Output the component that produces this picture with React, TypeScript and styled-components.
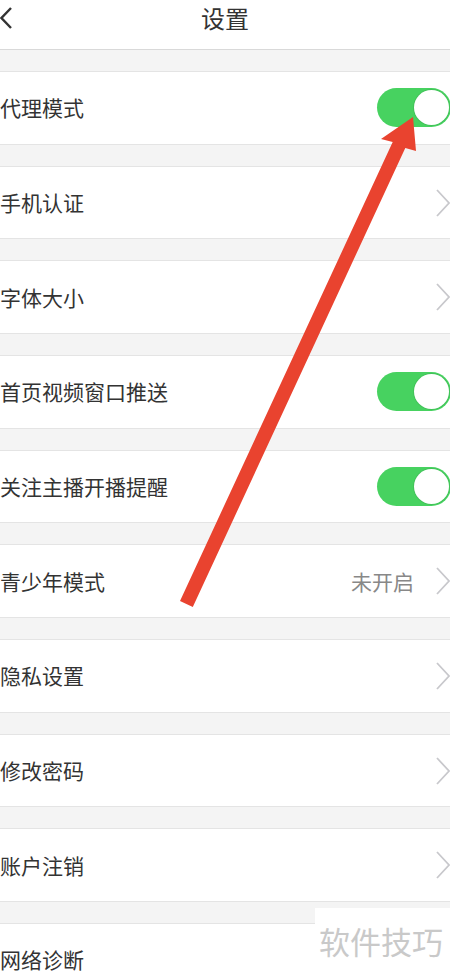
import React from "react";
import styled, { createGlobalStyle } from "styled-components";

const Global = createGlobalStyle`
  html, body {
    margin: 0;
    padding: 0;
    background: #f4f4f4;
    width: 450px;
    height: 975px;
    overflow: hidden;
  }
  body {
    font-family: "Noto Sans CJK SC", "Noto Sans", sans-serif;
    color: #333;
  }
`;

const Page = styled.div`
  position: relative;
  width: 450px;
  height: 975px;
  overflow: hidden;
  background: #f4f4f4;
`;

const Header = styled.header`
  height: 49px;
  background: #fff;
  border-bottom: 1px solid #d9d9d9;
  display: grid;
  grid-template-columns: 1fr auto 1fr;
  align-items: start;
`;

const BackButton = styled.div`
  display: flex;
  align-items: center;
  height: 36px;
  padding-left: 0;
`;

const Title = styled.h1`
  margin: 0;
  font-size: 24px;
  font-weight: 400;
  line-height: 36px;
  color: #333;
`;

const List = styled.div`
  display: flex;
  flex-direction: column;
  gap: 21.17px;
  padding-top: 21.17px;
`;

const Row = styled.div`
  height: 71.5px;
  background: #fff;
  border-top: 1px solid #e4e4e4;
  border-bottom: 1px solid #e4e4e4;
  display: flex;
  align-items: center;
  justify-content: space-between;
`;

const Label = styled.span`
  font-size: 21px;
  line-height: 1;
  color: #333;
`;

const Right = styled.div`
  display: flex;
  align-items: center;
`;

const Value = styled.span`
  font-size: 21px;
  line-height: 1;
  color: #888;
  margin-right: 22px;
`;

const Chevron = styled.svg`
  display: block;
  width: 14px;
  height: 28px;
`;

const Switch = styled.div<{ $on: boolean }>`
  width: 74px;
  height: 39px;
  border-radius: 20px;
  box-sizing: border-box;
  background: ${(p) => (p.$on ? "#47d260" : "#e5e5e5")};
  display: flex;
  align-items: center;
  justify-content: ${(p) => (p.$on ? "flex-end" : "flex-start")};
  padding: 0 2px;
  margin-right: -1px;
`;

const Knob = styled.div`
  width: 35px;
  height: 35px;
  border-radius: 50%;
  background: #fff;
  box-shadow: 0 0 0 1px rgba(0, 0, 0, 0.08);
`;

const Overlay = styled.svg`
  position: absolute;
  left: 0;
  top: 0;
  width: 450px;
  height: 975px;
  pointer-events: none;
`;

const Watermark = styled.div`
  position: absolute;
  right: 0;
  bottom: 0;
  width: 135px;
  height: 67px;
  background: #fff;
  display: flex;
  align-items: center;
  padding-left: 4px;
  box-sizing: border-box;
  font-size: 31px;
  color: #c9c9c9;
  line-height: 1;
  padding-bottom: 2px;
`;

type Item = {
  label: string;
  kind: "switch" | "link";
  value?: string;
};

const items: Item[] = [
  { label: "代理模式", kind: "switch" },
  { label: "手机认证", kind: "link" },
  { label: "字体大小", kind: "link" },
  { label: "首页视频窗口推送", kind: "switch" },
  { label: "关注主播开播提醒", kind: "switch" },
  { label: "青少年模式", kind: "link", value: "未开启" },
  { label: "隐私设置", kind: "link" },
  { label: "修改密码", kind: "link" },
  { label: "账户注销", kind: "link" },
  { label: "网络诊断", kind: "link" },
];

const ChevronIcon = () => (
  <Chevron viewBox="0 0 14 28">
    <polyline
      points="1,1 13,14 1,27"
      fill="none"
      stroke="#c8c8cc"
      strokeWidth="1.8"
      strokeLinejoin="miter"
    />
  </Chevron>
);

export default function App() {
  return (
    <>
      <Global />
      <Page>
        <Header>
          <BackButton>
            <svg width="14" height="24" viewBox="0 0 14 24">
              <polyline
                points="11,2 1.5,12 11,22"
                fill="none"
                stroke="#333"
                strokeWidth="2.4"
              />
            </svg>
          </BackButton>
          <Title>设置</Title>
          <div />
        </Header>
        <List>
          {items.map((it) => (
            <Row key={it.label}>
              <Label>{it.label}</Label>
              <Right>
                {it.kind === "switch" ? (
                  <Switch $on>
                    <Knob />
                  </Switch>
                ) : (
                  <>
                    {it.value && <Value>{it.value}</Value>}
                    <ChevronIcon />
                  </>
                )}
              </Right>
            </Row>
          ))}
        </List>
        <Overlay viewBox="0 0 450 975">
          <polygon
            points="180,601 392.7,142 381,139 413,117 416,151 405.3,148 192.8,607"
            fill="#e9432f"
          />
        </Overlay>
        <Watermark>软件技巧</Watermark>
      </Page>
    </>
  );
}
